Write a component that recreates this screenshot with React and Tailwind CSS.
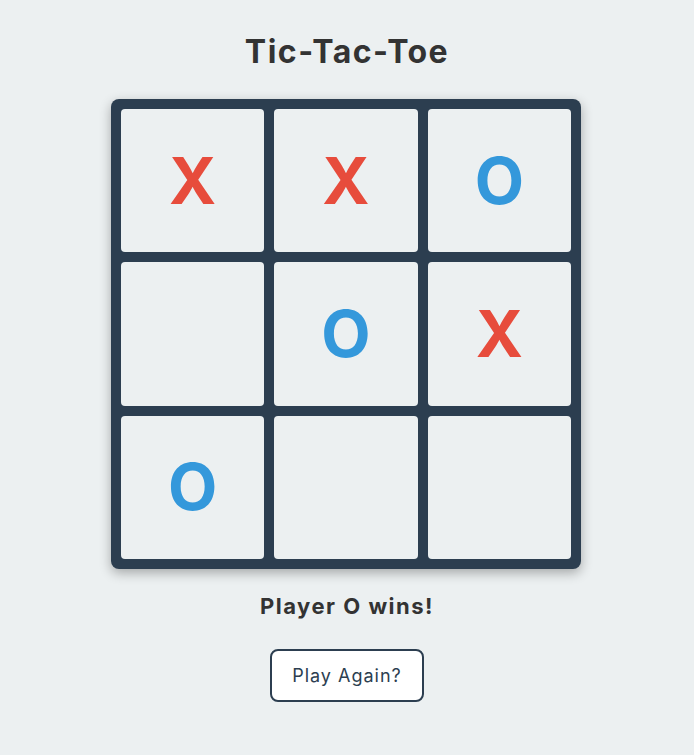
const board = ['X', 'X', 'O', '', 'O', 'X', 'O', '', ''];

function Cell({ value }) {
  return (
    <div className="flex items-center justify-center rounded bg-[#ecf0f1] text-[64px] font-bold leading-none">
      {value === 'X' && <span className="text-[#e74c3c]">X</span>}
      {value === 'O' && <span className="text-[#3498db]">O</span>}
    </div>
  );
}

export default function App() {
  return (
    <div
      className="min-h-[755px] bg-[#ecf0f1] flex flex-col items-center pt-[28px] text-[#333]"
      style={{ fontFamily: 'Inter, "Noto Sans", sans-serif' }}
    >
      <h1 className="text-[32px] leading-[48px] font-bold tracking-[1.5px]">Tic-Tac-Toe</h1>

      <div className="mt-[23px] mr-[2px] w-[470px] h-[470px] grid grid-cols-3 grid-rows-3 gap-[10px] p-[10px] bg-[#2c3e50] rounded-lg shadow-[0_4px_12px_rgba(0,0,0,0.3)]">
        {board.map((v, i) => (
          <Cell key={i} value={v} />
        ))}
      </div>

      <p className="mt-[21px] text-[22px] leading-[33px] font-bold tracking-[1.5px]">Player O wins!</p>

      <button className="mt-[26px] w-[154px] h-[53px] bg-white border-2 border-[#2c3e50] rounded-lg text-[18px] text-[#2c3e50] tracking-[1px]">
        Play Again?
      </button>
    </div>
  );
}
